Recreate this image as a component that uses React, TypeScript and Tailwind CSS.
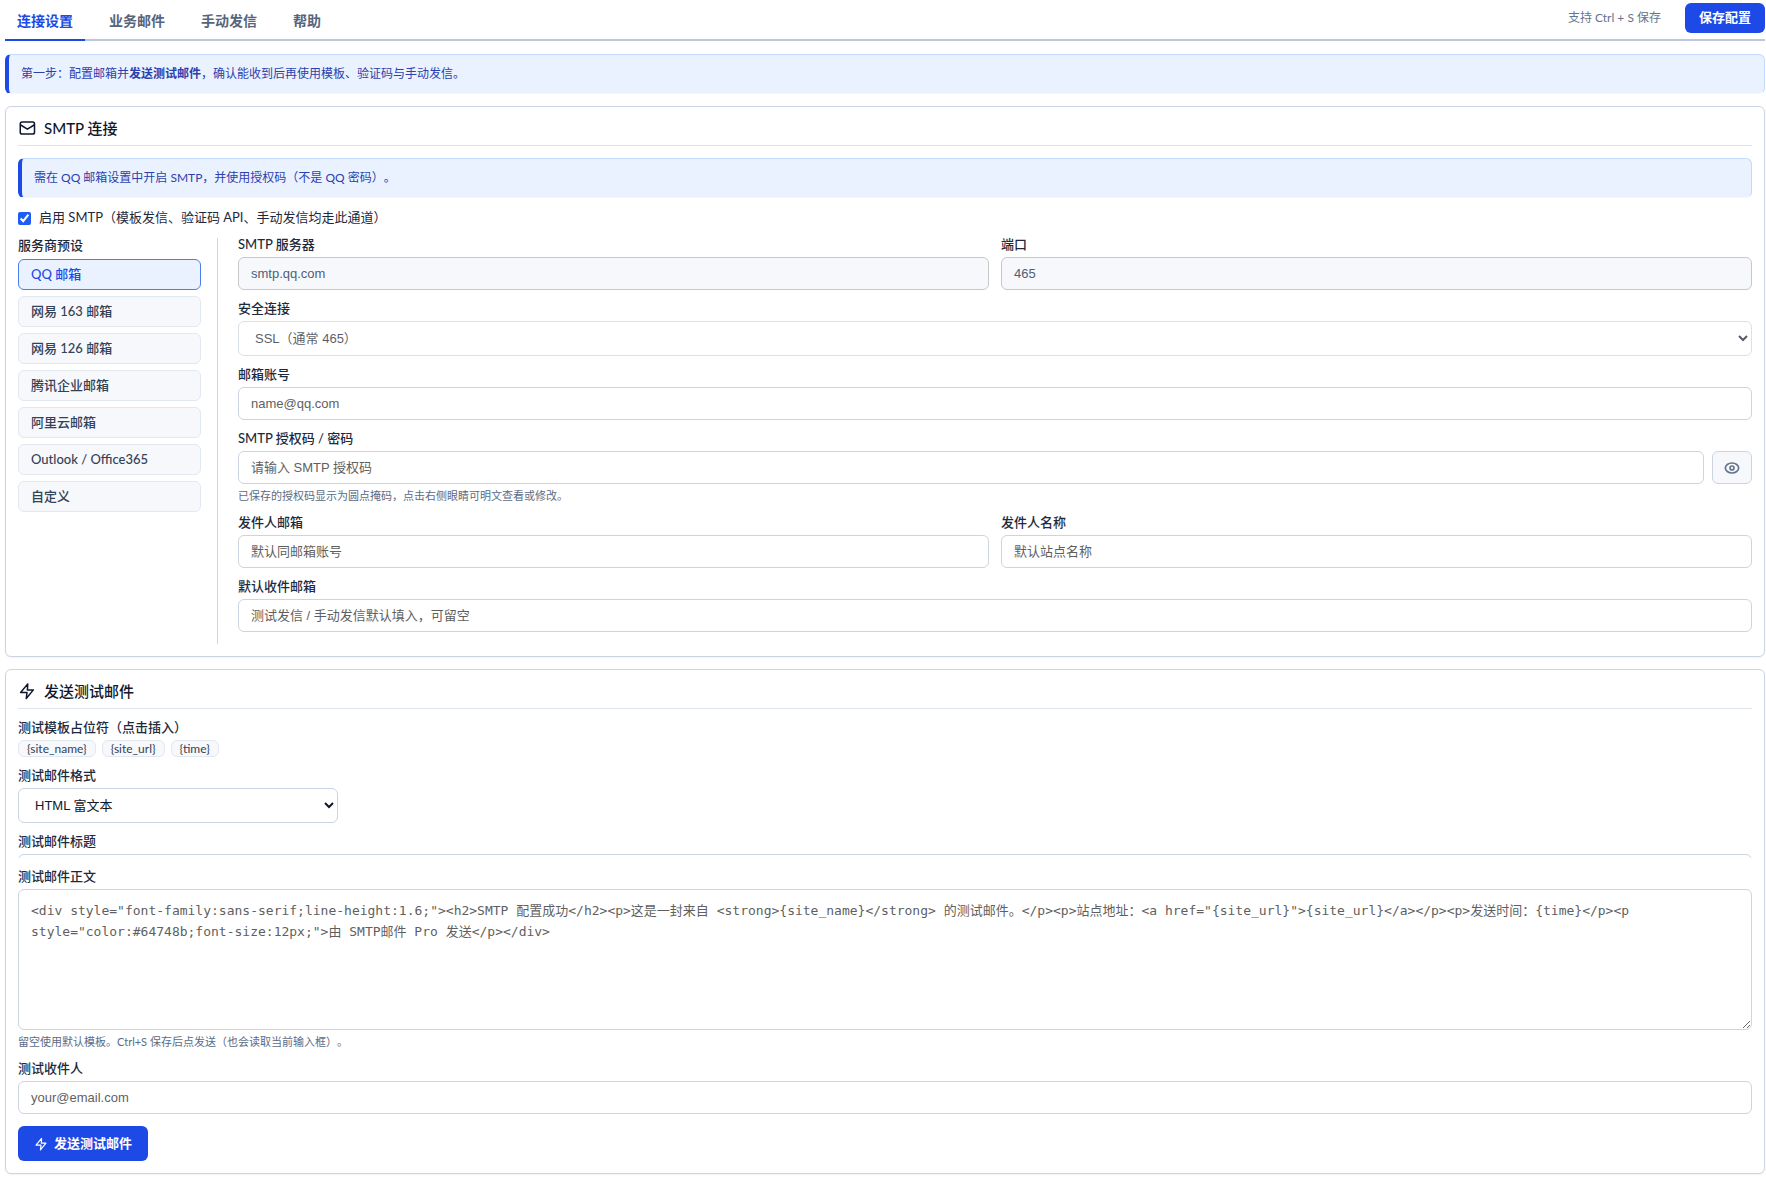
import clsx from "clsx";
import { FC, ReactNode, useState } from "react";

const TABS = ["连接设置", "业务邮件", "手动发信", "帮助"];

const PRESETS = [
  "QQ 邮箱",
  "网易 163 邮箱",
  "网易 126 邮箱",
  "腾讯企业邮箱",
  "阿里云邮箱",
  "Outlook / Office365",
  "自定义",
];

const PLACEHOLDERS = ["{site_name}", "{site_url}", "{time}"];

const DEFAULT_BODY =
  '<div style="font-family:sans-serif;line-height:1.6;"><h2>SMTP 配置成功</h2><p>这是一封来自 <strong>{site_name}</strong> 的测试邮件。</p><p>站点地址：<a href="{site_url}">{site_url}</a></p><p>发送时间：{time}</p><p style="color:#64748b;font-size:12px;">由 SMTP邮件 Pro 发送</p></div>';

const INPUT =
  "block h-[33px] w-full rounded-md border border-[#cbd5e1] bg-white px-3 font-['Liberation_Sans','Noto_Sans_CJK_SC',sans-serif] text-[13px] text-[#1e293b] placeholder:text-[#5f5f5f]";
const READONLY =
  "block h-[33px] w-full rounded-md border border-[#c8c8c8] bg-[#f6f8fc] px-3 font-['Liberation_Sans','Noto_Sans_CJK_SC',sans-serif] text-[13px] text-[#4f5f78]";
const SELECT =
  "block h-[35px] rounded-md border border-[#cbd5e1] bg-white px-3 font-['Liberation_Sans','Noto_Sans_CJK_SC',sans-serif] text-[13px] text-[#0f172a]";

interface IconProps {
  className?: string;
}

const MailIcon: FC<IconProps> = ({ className }) => (
  <svg
    viewBox="0 0 24 24"
    fill="none"
    stroke="currentColor"
    strokeWidth="2"
    strokeLinecap="round"
    strokeLinejoin="round"
    className={className}
  >
    <rect x="3" y="4" width="19" height="16" rx="2.5" />
    <path d="M3.5 8l9 5.5 9-5.5" />
  </svg>
);

const BoltIcon: FC<IconProps> = ({ className }) => (
  <svg
    viewBox="0 0 24 24"
    fill="none"
    stroke="currentColor"
    strokeWidth="2"
    strokeLinecap="round"
    strokeLinejoin="round"
    className={className}
  >
    <path d="M13 2.5L3.5 14H12l-1 8 9.500-11.500H12.500z" />
  </svg>
);

const EyeIcon: FC<IconProps> = ({ className }) => (
  <svg
    viewBox="0 0 24 24"
    fill="none"
    stroke="currentColor"
    strokeWidth="2.5"
    className={className}
  >
    <path d="M12 4.500c5.500 0 10 3.500 10 7.500s-4.500 7.500-10 7.500S2 16 2 12s4.500-7.500 10-7.500z" />
    <circle cx="12" cy="12" r="3" />
  </svg>
);

const Notice: FC<{ children: ReactNode }> = ({ children }) => (
  <p className="mb-3 flex h-10 items-center rounded-md border border-l-4 border-[#bfdbfe] border-b-[#f0f6ff] border-l-[#1d4ae6] bg-[#eaf2ff] px-3 text-xs text-[#2a41ae]">
    <span>{children}</span>
  </p>
);

interface CardProps {
  title: string;
  icon: ReactNode;
  children: ReactNode;
}

const Card: FC<CardProps> = ({ title, icon, children }) => (
  <section className="mb-3 rounded-md border border-[#cbd5e1] bg-white p-3 shadow-xs">
    <h2 className="mb-3 flex items-center gap-2 border-b border-[#dde4ee] pb-2 text-[15px] leading-[18px] font-medium text-[#0f172a]">
      {icon}
      {title}
    </h2>
    {children}
  </section>
);

interface FieldProps {
  id: string;
  label: string;
  hint?: string;
  children: ReactNode;
}

const Field: FC<FieldProps> = ({ id, label, hint, children }) => (
  <div className="mb-3 min-w-0">
    <label
      htmlFor={id}
      className="mb-1.5 block text-[13px] leading-[13px] font-medium text-[#1e293b]"
    >
      {label}
    </label>
    {children}
    {hint && (
      <p className="mt-1 text-[11px] leading-4 text-[#5b6b84]">{hint}</p>
    )}
  </div>
);

const App: FC = () => {
  const [tab, setTab] = useState(TABS[0]);
  const [preset, setPreset] = useState(PRESETS[0]);
  const [isShown, setIsShown] = useState(false);

  return (
    <main className="bg-white pr-px pl-[5px] font-['Lato','Noto_Sans_CJK_SC',sans-serif] text-[#1e293b] [text-spacing-trim:space-all]">
      <header className="mb-[13px] flex h-[41px] justify-between border-b-2 border-[#bcc8da]">
        <nav className="-mb-0.5 flex gap-3">
          {TABS.map((name) => (
            <button
              key={name}
              type="button"
              onClick={() => setTab(name)}
              className={clsx(
                "border-b-2 px-3 pt-0.5 text-sm font-bold",
                tab === name
                  ? "border-[#1d4ae6] text-[#1d4ae6]"
                  : "border-transparent text-[#56657c]",
              )}
            >
              {name}
            </button>
          ))}
        </nav>
        <div className="flex items-center gap-6 pb-1">
          <span className="text-xs text-[#64748b]">支持 Ctrl + S 保存</span>
          <button
            type="button"
            className="h-[30px] rounded-md bg-[#1d4ae6] px-3.5 text-[13px] font-bold text-white"
          >
            保存配置
          </button>
        </div>
      </header>

      <Notice>
        第一步：配置邮箱并<strong>发送测试邮件</strong>
        ，确认能收到后再使用模板、验证码与手动发信。
      </Notice>

      <Card title="SMTP 连接" icon={<MailIcon className="size-[18px]" />}>
        <Notice>
          需在 QQ 邮箱设置中开启 SMTP，并使用授权码（不是 QQ 密码）。
        </Notice>
        <label className="mb-3 flex h-4 items-center gap-2 text-[13px]">
          <input
            type="checkbox"
            defaultChecked
            className="size-[13px] accent-[#1d5cf5]"
          />
          启用 SMTP（模板发信、验证码 API、手动发信均走此通道）
        </label>

        <div className="flex gap-5">
          <div className="flex w-[200px] shrink-0 flex-col gap-1.5 border-r border-[#cbd5e1] pr-4">
            <p className="text-[13px] leading-[15px] font-medium">服务商预设</p>
            {PRESETS.map((name) => (
              <button
                key={name}
                type="button"
                onClick={() => setPreset(name)}
                className={clsx(
                  "h-[31px] rounded-md border px-3 text-left text-[13px] font-medium",
                  preset === name
                    ? "border-[#4a7df0] bg-[#eaf2ff] text-[#1d4ae6]"
                    : "border-[#e2e8f0] bg-[#f6f8fc] text-[#334155]",
                )}
              >
                {name}
              </button>
            ))}
          </div>

          <div className="min-w-0 flex-1">
            <div className="grid grid-cols-2 gap-3">
              <Field id="host" label="SMTP 服务器">
                <input
                  id="host"
                  readOnly
                  defaultValue="smtp.qq.com"
                  className={READONLY}
                />
              </Field>
              <Field id="port" label="端口">
                <input
                  id="port"
                  readOnly
                  defaultValue="465"
                  className={READONLY}
                />
              </Field>
            </div>
            <Field id="secure" label="安全连接">
              <select
                id="secure"
                disabled
                className={clsx(SELECT, "w-full opacity-70")}
              >
                <option>SSL（通常 465）</option>
              </select>
            </Field>
            <Field id="user" label="邮箱账号">
              <input id="user" placeholder="name@qq.com" className={INPUT} />
            </Field>
            <Field
              id="pass"
              label="SMTP 授权码 / 密码"
              hint="已保存的授权码显示为圆点掩码，点击右侧眼睛可明文查看或修改。"
            >
              <div className="flex gap-2">
                <input
                  id="pass"
                  type={isShown ? "text" : "password"}
                  placeholder="请输入 SMTP 授权码"
                  className={INPUT}
                />
                <button
                  type="button"
                  aria-label="显示或隐藏授权码"
                  onClick={() => setIsShown(!isShown)}
                  className="flex w-10 shrink-0 items-center justify-center rounded-md border border-[#cbd5e1] bg-[#f6f8fc] text-[#64748b]"
                >
                  <EyeIcon className="size-4" />
                </button>
              </div>
            </Field>
            <div className="grid grid-cols-2 gap-3">
              <Field id="from" label="发件人邮箱">
                <input
                  id="from"
                  placeholder="默认同邮箱账号"
                  className={INPUT}
                />
              </Field>
              <Field id="from-name" label="发件人名称">
                <input
                  id="from-name"
                  placeholder="默认站点名称"
                  className={INPUT}
                />
              </Field>
            </div>
            <Field id="to" label="默认收件邮箱">
              <input
                id="to"
                placeholder="测试发信 / 手动发信默认填入，可留空"
                className={INPUT}
              />
            </Field>
          </div>
        </div>
      </Card>

      <Card title="发送测试邮件" icon={<BoltIcon className="size-[18px]" />}>
        <p className="mb-1.5 text-[13px] leading-[13px] font-medium">
          测试模板占位符（点击插入）
        </p>
        <div className="mb-3 flex gap-1.5">
          {PLACEHOLDERS.map((name) => (
            <button
              key={name}
              type="button"
              className="h-[17px] rounded-md border border-[#e2e8f0] bg-[#f6f8fc] px-2 text-xs leading-[14px] text-[#334155]"
            >
              {name}
            </button>
          ))}
        </div>
        <Field id="format" label="测试邮件格式">
          <select id="format" className={clsx(SELECT, "w-80")}>
            <option>HTML 富文本</option>
            <option>纯文本</option>
          </select>
        </Field>
        <Field id="subject" label="测试邮件标题">
          <div className="h-1 overflow-hidden">
            <input id="subject" className={INPUT} />
          </div>
        </Field>
        <Field
          id="body"
          label="测试邮件正文"
          hint="留空使用默认模板。Ctrl+S 保存后点发送（也会读取当前输入框）。"
        >
          <textarea
            id="body"
            placeholder={DEFAULT_BODY}
            className="block h-[141px] w-full resize-y rounded-md border border-[#cbd5e1] bg-white px-3 py-2.5 font-['DejaVu_Sans_Mono','Noto_Sans_CJK_SC',monospace] text-[13px] leading-[21px] placeholder:text-[#5f5f5f]"
          />
        </Field>
        <Field id="test-to" label="测试收件人">
          <input id="test-to" placeholder="your@email.com" className={INPUT} />
        </Field>
        <button
          type="button"
          className="flex h-[35px] items-center gap-1.5 rounded-md bg-[#1d4ae6] px-4 text-[13px] font-bold text-white"
        >
          <BoltIcon className="size-3.5" />
          发送测试邮件
        </button>
      </Card>
    </main>
  );
};

export default App;
